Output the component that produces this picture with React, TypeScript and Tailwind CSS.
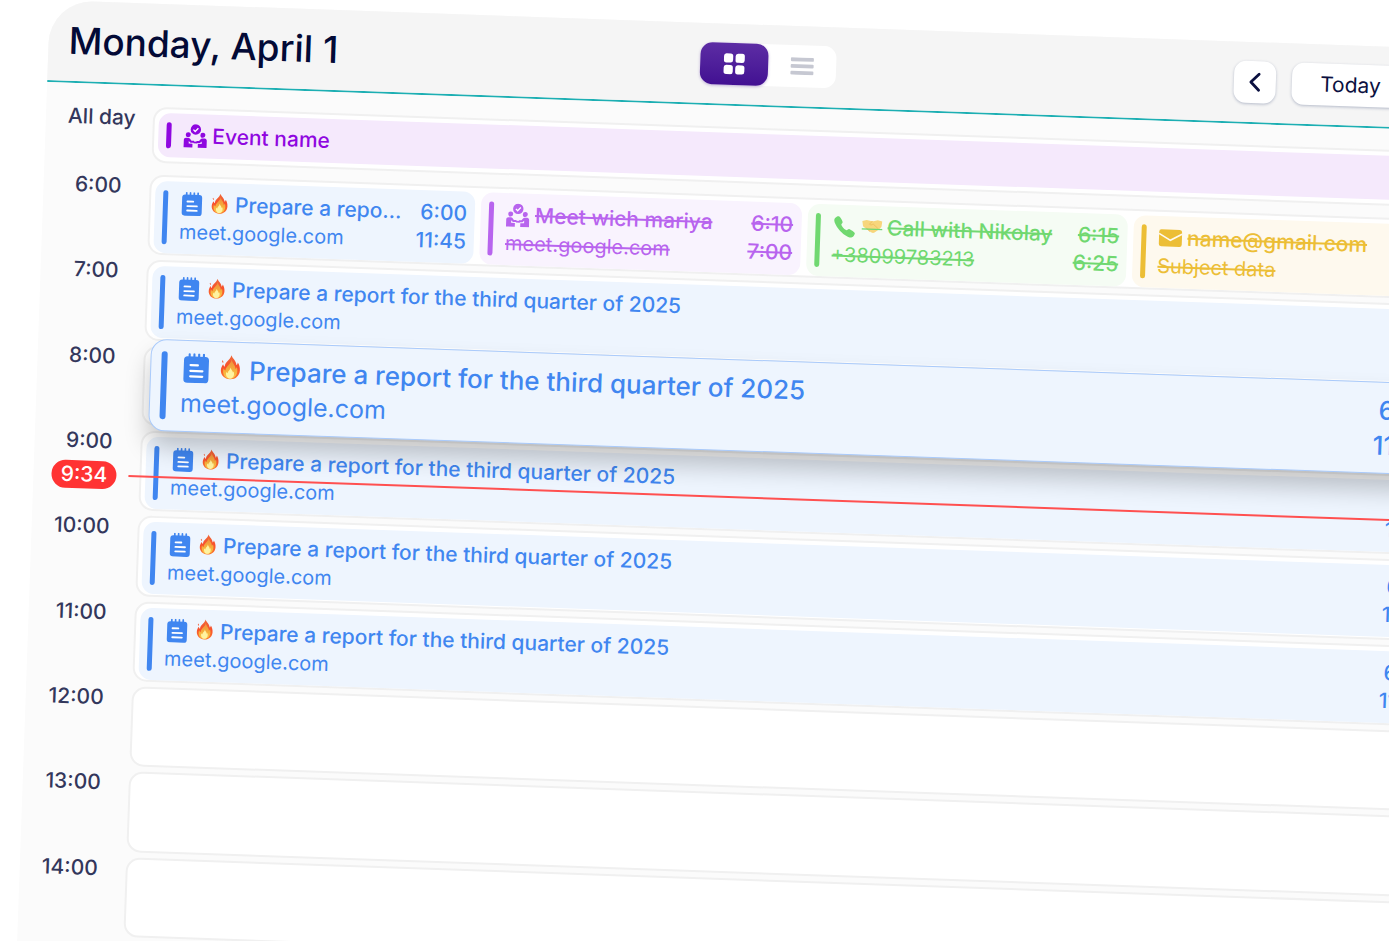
import { ReactNode } from "react";
import { IoCall } from "react-icons/io5";

function NotepadIcon({ className }: { className: string }) {
  return (
    <svg viewBox="0 0 24 24" className={className} fill="none" aria-hidden="true">
      <rect x="2" y="2.6" width="20" height="21.2" rx="3" fill="currentColor" />
      <path d="M6.4 .9v3M10.2 .9v3M14 .9v3M17.8 .9v3" stroke="currentColor" strokeWidth="1.7" strokeLinecap="round" />
      <path d="M7.4 9.6h5.8M7.4 14.2h9.6M7.4 18.6h9.6" stroke="#fff" strokeWidth="1.8" strokeLinecap="round" />
    </svg>
  );
}

function MeetingIcon({ className }: { className: string }) {
  return (
    <svg viewBox="0 0 24 24" className={className} fill="currentColor" aria-hidden="true">
      <circle cx="12.3" cy="5.4" r="5.2" />
      <path d="M9.9 5.5l1.8 1.8 3.1-3.3" fill="none" stroke="#fff" strokeWidth="1.3" />
      <circle cx="4.9" cy="10.8" r="2.5" />
      <circle cx="19.5" cy="10.8" r="2.5" />
      <path d="M.6 23.4v-7.2c0-1.3 1-2.2 2.2-2.2h2.4c.7 0 1.2.3 1.6.8l1.5 1.9h2.6v2H7.4L5.6 17v2.6h3.8v3.8z" />
      <path d="M23.6 23.4v-7.2c0-1.3-1-2.2-2.2-2.2H19c-.7 0-1.2.3-1.6.8l-1.5 1.9h-2.6v2h3.5l1.8-1.7v2.6h-3.8v3.8z" />
      <path d="M10.4 17.4h3.8v1.8h-3.8z" />
    </svg>
  );
}

function MailIcon({ className }: { className: string }) {
  return (
    <svg viewBox="0 0 24 24" className={className} fill="none" aria-hidden="true">
      <rect x=".6" y="3.4" width="23" height="17" rx="2.4" fill="currentColor" />
      <path d="M.6 7.5l11.5 6.6L23.6 7.5" stroke="#fffaf0" strokeWidth="1.7" />
    </svg>
  );
}

function FireEmoji({ className }: { className: string }) {
  return (
    <svg viewBox="0 0 22 26" className={className} role="img" aria-label="fire">
      <defs>
        <linearGradient id="flameOuter" x1="0" y1="0" x2="0" y2="1">
          <stop offset="0" stopColor="#ee6a3a" />
          <stop offset=".5" stopColor="#f8502c" />
          <stop offset="1" stopColor="#fb7a2e" />
        </linearGradient>
        <linearGradient id="flameMiddle" x1="0" y1="0" x2="0" y2="1">
          <stop offset="0" stopColor="#ee8a3c" />
          <stop offset=".6" stopColor="#f6b03c" />
          <stop offset="1" stopColor="#fcc84a" />
        </linearGradient>
      </defs>
      <path
        d="M11.6 .6c.9 2.6 4.2 4.4 4.7 8.3.7-.5 1-1.3 1-2.3 1.3 1.5 2.2 4.2 2.1 7-.1 4.7-3.5 7.9-8.3 7.9s-8.2-3.2-8.2-7.5c0-2.4.9-4 1.8-5.4.3 1.1.8 1.7 1.5 2.2-.2-4.5 4.6-5.7 5.4-10.2z"
        fill="url(#flameOuter)"
      />
      <path d="M4 5.2c.8.6 1 1.4.7 2.4-.9-.5-1.2-1.4-.7-2.4z" fill="#f0552b" />
      <path
        d="M12 4c.2 3.200 3.600 4.900 3.500 8.300.7-.4 1-.9 1.200-1.600 1.700 5.400-.9 10.300-5.600 10.300-4.400 0-7.200-3.900-5.900-9 .5 1.200 1 1.700 1.700 1.900.2-4 4.800-5.400 5.100-9.900z"
        fill="url(#flameMiddle)"
      />
      <path
        d="M11.3 11.200c.3 1.900 2.100 2.600 2.100 4.400.4-.2.6-.5.7-.9 1.100 3.400-.4 6.200-3 6.200s-4.200-2.600-3.400-5.800c.3.7.6 1 1.100 1.200.1-2 2.300-2.800 2.500-5.100z"
        fill="#fff3a0"
      />
    </svg>
  );
}

function HandshakeEmoji({ className }: { className: string }) {
  return (
    <svg viewBox="0 0 22 26" className={className} role="img" aria-label="handshake">
      <path
        d="M.6 5.600l4.600-1.200 4.400 1 2.800.1 4.400-1.100 4.700 1.200-.7 5.600-2.300 2.400-4.700 3.700c-1 .6-2.600.6-3.600-.1l-5.600-3.600-3.100-2.400z"
        fill="#f7d67c"
      />
      <path
        d="M11 5.600L8.200 8.800c1.200 1 2.700.6 3.800-.4l5.500 4.800M5.200 13l3.900 3.500"
        fill="none"
        stroke="#eebf5c"
        strokeWidth=".9"
        strokeLinejoin="round"
      />
      <path d="M0 14h22" stroke="#70d870" strokeWidth="1.400" />
    </svg>
  );
}

type Tone = "violet" | "blue" | "violetDone" | "greenDone" | "amberDone";

const toneText: Record<Tone, string> = {
  violet: "bg-[#f5e9fc] text-[#8f07e0]",
  blue: "bg-[#eef5fe] text-[#4086f0]",
  violetDone: "bg-[#f9f3fe] text-[#b864ee] line-through",
  greenDone: "bg-[#f5fcf4] text-[#70d870] line-through",
  amberDone: "bg-[#fef9ee] text-[#ecbe36] line-through",
};

type EventProps = {
  tone: Tone;
  icon: ReactNode;
  emoji?: ReactNode;
  title: string;
  detail?: string;
  times?: [string, string];
};

function EventCard({ tone, icon, emoji, title, detail, times }: EventProps) {
  return (
    <article className={`flex min-w-0 gap-3 rounded-xl p-2 text-[21px] leading-7 ${toneText[tone]}`}>
      <span className="my-px w-[5px] shrink-0 rounded-full bg-current" />
      <div className="min-w-0 flex-1">
        <h2 className="flex items-center gap-[5px] font-medium">
          <span className="shrink-0">{icon}</span>
          {emoji && <span className="shrink-0">{emoji}</span>}
          <span className="truncate">{title}</span>
        </h2>
        {detail && <p className="truncate text-[20px]">{detail}</p>}
      </div>
      {times && (
        <div className="shrink-0 text-right font-medium">
          <p>{times[0]}</p>
          <p>{times[1]}</p>
        </div>
      )}
    </article>
  );
}

function ReportCard() {
  return (
    <EventCard
      tone="blue"
      icon={<NotepadIcon className="size-6" />}
      emoji={<FireEmoji className="h-[25px] w-[21px]" />}
      title="Prepare a report for the third quarter of 2025"
      detail="meet.google.com"
      times={["6:00", "11:45"]}
    />
  );
}

function LiftedReportCard() {
  return (
    <article className="absolute -top-[9px] right-[4px] left-[5px] z-10 flex gap-[14px] rounded-2xl border border-[#a9cafb] bg-[#eef5fe] p-[10px] text-[26px] leading-[35px] text-[#4086f0] shadow-[0_16px_24px_rgba(0,0,0,0.22)]">
      <span className="my-px w-[6px] shrink-0 rounded-full bg-current" />
      <div className="min-w-0 flex-1">
        <h2 className="flex items-center gap-[6px] font-medium">
          <NotepadIcon className="size-[30px] shrink-0" />
          <FireEmoji className="h-[30px] w-[26px] shrink-0" />
          <span className="truncate">Prepare a report for the third quarter of 2025</span>
        </h2>
        <p className="text-[25px]">meet.google.com</p>
      </div>
      <div className="shrink-0 text-right font-medium">
        <p>6:00</p>
        <p>11:45</p>
      </div>
    </article>
  );
}

function NowMarker() {
  return (
    <div className="absolute top-[32px] right-0 left-[18px] z-20 flex items-center gap-3">
      <time className="w-[65px] rounded-full bg-[#ff3333] text-center text-[21px] leading-7 font-medium text-white">9:34</time>
      <span className="h-[2px] flex-1 bg-[#ff5050]" />
    </div>
  );
}

function HourRow({ label, now, children }: { label: string; now?: boolean; children?: ReactNode }) {
  return (
    <div className="relative grid grid-cols-[106px_1fr]">
      <time className="pr-7 text-right text-[21px] leading-6 font-medium text-[#33375c]">{label}</time>
      <div className="relative min-w-0 rounded-[14px] border-2 border-[#f0f0f0] bg-white p-1 pb-0">{children}</div>
      {now && <NowMarker />}
    </div>
  );
}

export default function App() {
  return (
    <main className="h-screen overflow-hidden bg-white font-['Inter',sans-serif]">
      <section className="ml-[50px] w-[calc(100%+54px)] origin-top-left rotate-2 rounded-tl-[43px] bg-[#fbfbfb] pb-10">
        <header className="grid h-[82px] grid-cols-[1fr_auto_1fr] items-center rounded-tl-[43px] border-b-2 border-[#1dafb3] bg-[#f5f5f5] pr-6 pl-5">
          <h1 className="text-[37px] leading-[48px] font-medium text-[#030a36]">Monday, April 1</h1>
          <div className="flex rounded-xl bg-white">
            <button
              aria-label="Grid view"
              className="flex h-[42px] w-[68px] items-center justify-center rounded-xl bg-linear-to-b from-[#5d2ca4] to-[#420f92] shadow-[0_1px_3px_rgba(66,15,146,0.3)]"
            >
              <svg viewBox="0 0 22 22" className="size-[22px]" fill="#fff">
                <rect x=".6" y=".6" width="9.2" height="9.2" rx="2.6" />
                <rect x="12.2" y=".6" width="9.2" height="9.2" rx="2.6" />
                <rect x=".6" y="12.2" width="9.2" height="9.2" rx="2.6" />
                <rect x="12.2" y="12.2" width="9.2" height="9.2" rx="2.6" />
              </svg>
            </button>
            <button aria-label="List view" className="flex h-[42px] w-[68px] items-center justify-center rounded-xl">
              <svg viewBox="0 0 24 18" className="h-[18px] w-6" fill="#c6c8d2">
                <rect x=".5" y=".4" width="23" height="3.8" rx="1" />
                <rect x=".5" y="7.1" width="23" height="3.8" rx="1" />
                <rect x=".5" y="13.8" width="23" height="3.8" rx="1" />
              </svg>
            </button>
          </div>
          <nav className="flex justify-end gap-4 text-[21px] text-[#0b1040]">
            <button
              aria-label="Previous day"
              className="flex size-[42px] items-center justify-center rounded-xl bg-white shadow-[0_1px_3px_rgba(30,50,100,0.3)]"
            >
              <svg viewBox="0 0 14 20" className="h-5 w-[14px]" fill="none" stroke="currentColor" strokeWidth="2.8" strokeLinecap="round" strokeLinejoin="round">
                <path d="M11 2L3 10l8 8" />
              </svg>
            </button>
            <button className="h-[42px] rounded-xl bg-white px-7 shadow-[0_1px_3px_rgba(30,50,100,0.3)]">Today</button>
            <button
              aria-label="Next day"
              className="flex size-[42px] items-center justify-center rounded-xl bg-white shadow-[0_1px_3px_rgba(30,50,100,0.3)]"
            >
              <svg viewBox="0 0 14 20" className="h-5 w-[14px]" fill="none" stroke="currentColor" strokeWidth="2.8" strokeLinecap="round" strokeLinejoin="round">
                <path d="M3 2l8 8-8 8" />
              </svg>
            </button>
          </nav>
        </header>

        <div className="pt-[21px] pr-[26px]">
          <div className="mb-3 grid grid-cols-[107px_1fr]">
            <span className="pl-[22px] text-[21px] leading-6 font-medium text-[#33375c]">All day</span>
            <div className="rounded-[14px] border-2 border-[#f0f0f0] bg-white p-1">
              <EventCard tone="violet" icon={<MeetingIcon className="size-6" />} title="Event name" />
            </div>
          </div>

          <div className="grid h-[763px] auto-rows-fr gap-[5px]">
            <HourRow label="6:00">
              <div className="grid grid-cols-4 gap-[6px]">
                <ReportCard />
                <EventCard
                  tone="violetDone"
                  icon={<MeetingIcon className="size-6" />}
                  title="Meet wich mariya"
                  detail="meet.google.com"
                  times={["6:10", "7:00"]}
                />
                <EventCard
                  tone="greenDone"
                  icon={<IoCall className="size-6" />}
                  emoji={<HandshakeEmoji className="h-[25px] w-[21px]" />}
                  title="Call with Nikolay"
                  detail="+38099783213"
                  times={["6:15", "6:25"]}
                />
                <EventCard tone="amberDone" icon={<MailIcon className="size-6" />} title="name@gmail.com" detail="Subject data" />
              </div>
            </HourRow>
            <HourRow label="7:00">
              <ReportCard />
            </HourRow>
            <HourRow label="8:00">
              <LiftedReportCard />
            </HourRow>
            <HourRow label="9:00" now>
              <ReportCard />
            </HourRow>
            <HourRow label="10:00">
              <ReportCard />
            </HourRow>
            <HourRow label="11:00">
              <ReportCard />
            </HourRow>
            <HourRow label="12:00" />
            <HourRow label="13:00" />
            <HourRow label="14:00" />
          </div>
        </div>
      </section>
    </main>
  );
}
